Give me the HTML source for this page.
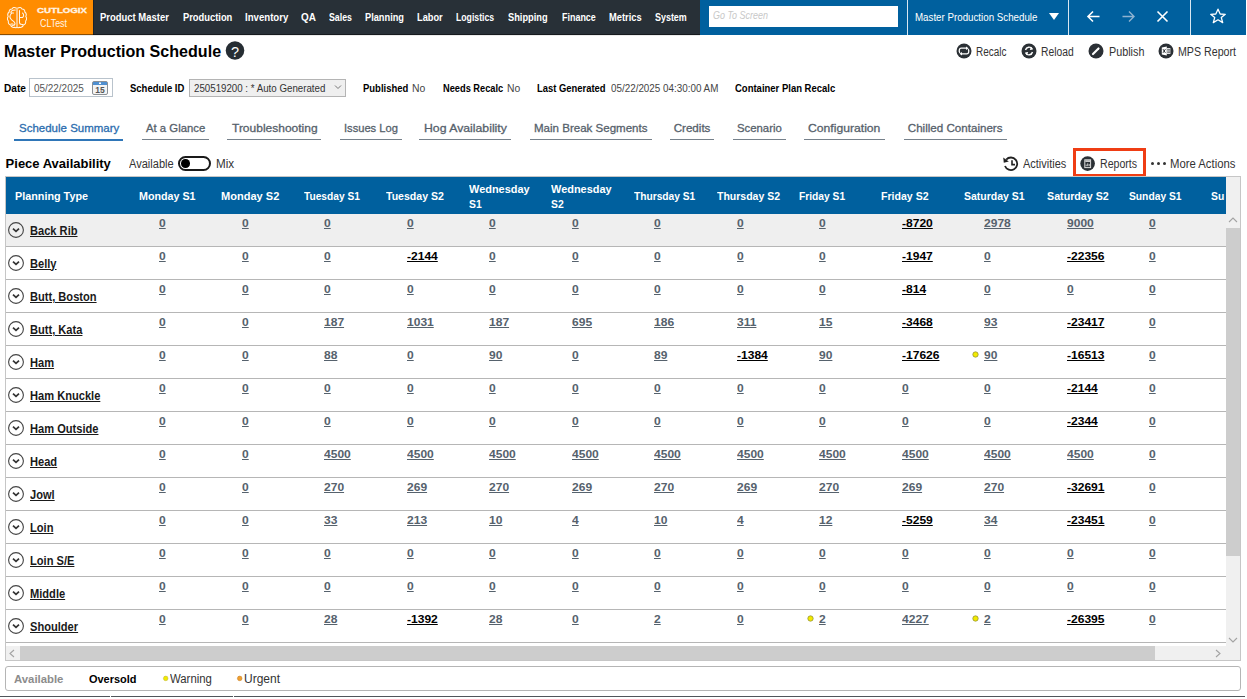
<!DOCTYPE html>
<html><head><meta charset="utf-8"><title>Master Production Schedule</title>
<style>
html,body{margin:0;padding:0;background:#fff;width:1247px;height:699px;overflow:hidden;}
body{position:relative;font-family:"Liberation Sans",sans-serif;}
.t{position:absolute;white-space:nowrap;transform-origin:0 0;}
.r{position:absolute;}
</style></head><body>
<div class="r" style="left:0px;top:0px;width:93px;height:35px;background:#ff8c00;"></div>
<div class="r" style="left:93px;top:0px;width:607px;height:35px;background:#283037;"></div>
<div class="r" style="left:700px;top:0px;width:545.5px;height:35px;background:#00609e;"></div>
<div class="r" style="left:0px;top:34px;width:700px;height:1px;background:rgba(0,0,0,0.45);"></div>
<div class="r" style="left:92.5px;top:0px;width:1px;height:35px;background:rgba(0,0,0,0.25);"></div>
<div class="r" style="left:0px;top:35px;width:700px;height:1px;background:rgba(0,0,0,0.08);"></div>
<svg class="r" style="left:5px;top:6px;" width="23" height="23" viewBox="0 0 23 23"><g fill="none" stroke="#fff" stroke-width="1.05" opacity="0.92" stroke-linejoin="round" stroke-linecap="round">
<path d="M13 2 C14.5 1 16.5 1.5 17 3 C19 3 20 4.5 19.8 6 C21.3 7 21.5 9 20.8 10.5 C21.8 12 21.6 14 20.6 15 C21 17 20 18.8 18.3 19 C17.8 21 16 21.8 14.5 21.2 C13.8 22 12.5 22 12 21.5"/>
<path d="M11 2 C9.5 1 7.5 1.5 7 3 C5 3 4 4.5 4.2 6 C2.7 7 2.5 9 3.2 10.5 C2.2 12 2.4 14 3.4 15 C3 17 4 18.8 5.7 19 C6.2 21 8 21.8 9.5 21.2 C10.2 22 11.5 22 12 21.5"/>
<path d="M12 2 V21.5"/>
<path d="M10.3 4 C7 4 5.5 5.5 6 7 L8.5 7 M6.5 7.5 C4.5 9.5 4.8 12 6.3 13.5 C7.5 15 10 15.5 10 17.5 C10 19 9 19.5 7.5 19.5 M6 18 L8 18"/>
<path d="M14.5 4.5 V16.5 C14.5 18 15.5 18.5 17 18.5 L18 18.5 M17.5 7 C19 8 19 10.5 17.5 11.5 L15 11.5"/>
</g></svg>
<span class="t" style="left:37.00px;top:6.20px;font-size:7.5px;line-height:9px;color:#fff4e6;font-weight:bold;transform:scaleX(1.2903);-webkit-text-stroke:0.3px #fff4e6;">CUTLOGIX</span>
<span class="t" style="left:40.00px;top:18.00px;font-size:10px;line-height:11px;color:#fff4e6;transform:scaleX(0.8882);">CLTest</span>
<span class="t" style="left:100.10px;top:10.60px;font-size:11px;line-height:12px;color:#ffffff;font-weight:bold;transform:scaleX(0.8595);">Product Master</span>
<span class="t" style="left:182.60px;top:10.60px;font-size:11px;line-height:12px;color:#ffffff;font-weight:bold;transform:scaleX(0.8493);">Production</span>
<span class="t" style="left:245.20px;top:10.60px;font-size:11px;line-height:12px;color:#ffffff;font-weight:bold;transform:scaleX(0.8747);">Inventory</span>
<span class="t" style="left:301.20px;top:10.60px;font-size:11px;line-height:12px;color:#ffffff;font-weight:bold;transform:scaleX(0.9030);">QA</span>
<span class="t" style="left:328.60px;top:10.60px;font-size:11px;line-height:12px;color:#ffffff;font-weight:bold;transform:scaleX(0.7965);">Sales</span>
<span class="t" style="left:365.00px;top:10.60px;font-size:11px;line-height:12px;color:#ffffff;font-weight:bold;transform:scaleX(0.8396);">Planning</span>
<span class="t" style="left:417.30px;top:10.60px;font-size:11px;line-height:12px;color:#ffffff;font-weight:bold;transform:scaleX(0.8412);">Labor</span>
<span class="t" style="left:456.20px;top:10.60px;font-size:11px;line-height:12px;color:#ffffff;font-weight:bold;transform:scaleX(0.7888);">Logistics</span>
<span class="t" style="left:508.20px;top:10.60px;font-size:11px;line-height:12px;color:#ffffff;font-weight:bold;transform:scaleX(0.8417);">Shipping</span>
<span class="t" style="left:561.60px;top:10.60px;font-size:11px;line-height:12px;color:#ffffff;font-weight:bold;transform:scaleX(0.8135);">Finance</span>
<span class="t" style="left:609.00px;top:10.60px;font-size:11px;line-height:12px;color:#ffffff;font-weight:bold;transform:scaleX(0.8468);">Metrics</span>
<span class="t" style="left:655.10px;top:10.60px;font-size:11px;line-height:12px;color:#ffffff;font-weight:bold;transform:scaleX(0.8123);">System</span>
<div class="r" style="left:709px;top:6px;width:189px;height:21px;background:#ffffff;"></div>
<span class="t" style="left:713.00px;top:9.20px;font-size:11.2px;line-height:12px;color:#c8c8c8;font-style:italic;transform:scaleX(0.8006);">Go To Screen</span>
<div class="r" style="left:907px;top:0px;width:1px;height:35px;background:rgba(255,255,255,0.85);"></div>
<div class="r" style="left:1068px;top:0px;width:1px;height:35px;background:rgba(255,255,255,0.85);"></div>
<div class="r" style="left:1190px;top:0px;width:1px;height:35px;background:rgba(255,255,255,0.85);"></div>
<span class="t" style="left:915.30px;top:10.50px;font-size:11px;line-height:12px;color:#ffffff;transform:scaleX(0.8857);">Master Production Schedule</span>
<svg class="r" style="left:1048px;top:12px;" width="12" height="9" viewBox="0 0 12 9"><path d="M1 1 L11 1 L6 8 Z" fill="#fff"/></svg>
<svg class="r" style="left:1086px;top:10px;" width="15" height="13" viewBox="0 0 15 13"><path d="M13.5 6.5 H2 M7 1.5 L2 6.5 L7 11.5" fill="none" stroke="#fff" stroke-width="1.6"/></svg>
<svg class="r" style="left:1121px;top:10px;" width="15" height="13" viewBox="0 0 15 13"><path d="M1.5 6.5 H13 M8 1.5 L13 6.5 L8 11.5" fill="none" stroke="#8fb3d1" stroke-width="1.4"/></svg>
<svg class="r" style="left:1156px;top:10px;" width="13" height="13" viewBox="0 0 13 13"><path d="M1.5 1.5 L11.5 11.5 M11.5 1.5 L1.5 11.5" fill="none" stroke="#fff" stroke-width="1.6"/></svg>
<svg class="r" style="left:1209px;top:8px;" width="18" height="16" viewBox="0 0 18 16"><path d="M9 1.2 L11.2 6 L16.3 6.3 L12.3 9.6 L13.7 14.6 L9 11.8 L4.3 14.6 L5.7 9.6 L1.7 6.3 L6.8 6 Z" fill="none" stroke="#fff" stroke-width="1.3" stroke-linejoin="round"/></svg>
<span class="t" style="left:4.40px;top:41.60px;font-size:17px;line-height:19px;color:#000;font-weight:bold;transform:scaleX(0.9458);">Master Production Schedule</span>
<svg class="r" style="left:225px;top:41px;" width="20" height="20" viewBox="0 0 20 20"><circle cx="10" cy="9.5" r="9.3" fill="#262d33"/></svg>
<span class="t" style="left:230.80px;top:43.00px;font-size:15.5px;line-height:17px;color:#fff;transform:scaleX(0.9302);">?</span>
<svg class="r" style="left:955.6px;top:42.8px;" width="16" height="16" viewBox="0 0 16 16"><circle cx="8" cy="8" r="7.5" fill="#2b3035"/><path d="M11 5.2 H5.2 C3 5.2 2.8 8.4 3.8 9.8 M5 10.8 H10.8 C13 10.8 13.2 7.6 12.2 6.2" fill="none" stroke="#fff" stroke-width="1.3"/><path d="M10 3.4 L12.6 5.2 L10 7 Z M6 9 L3.4 10.8 L6 12.6 Z" fill="#fff"/></svg>
<span class="t" style="left:976.30px;top:44.80px;font-size:12px;line-height:14px;color:#333;transform:scaleX(0.8283);">Recalc</span>
<svg class="r" style="left:1020.5999999999999px;top:42.8px;" width="16" height="16" viewBox="0 0 16 16"><circle cx="8" cy="8" r="7.5" fill="#2b3035"/><path d="M4.5 7 A3.7 3.7 0 0 1 11.3 6 M11.5 9 A3.7 3.7 0 0 1 4.7 10" fill="none" stroke="#fff" stroke-width="1.4"/><path d="M10 3.8 L12 6.6 L8.8 6.9 Z M6 12.2 L4 9.4 L7.2 9.1 Z" fill="#fff"/></svg>
<span class="t" style="left:1041.30px;top:44.80px;font-size:12px;line-height:14px;color:#333;transform:scaleX(0.8594);">Reload</span>
<svg class="r" style="left:1088.4px;top:42.8px;" width="16" height="16" viewBox="0 0 16 16"><circle cx="8" cy="8" r="7.5" fill="#2b3035"/><path d="M5 11 L10.5 5.5" stroke="#fff" stroke-width="2.2" stroke-linecap="round"/></svg>
<span class="t" style="left:1108.90px;top:44.80px;font-size:12px;line-height:14px;color:#333;transform:scaleX(0.8996);">Publish</span>
<svg class="r" style="left:1158.2px;top:42.8px;" width="16" height="16" viewBox="0 0 16 16"><circle cx="8" cy="8" r="7.5" fill="#2b3035"/><path d="M3.8 4.6 L8.8 3.6 V12.4 L3.8 11.4 Z" fill="#fff"/><path d="M5 6.2 L7.4 9.8 M7.4 6.2 L5 9.8" stroke="#2b3035" stroke-width="1"/><rect x="8.8" y="5" width="3.6" height="6" fill="#fff" opacity="0.85"/><path d="M9.2 6.6 H12 M9.2 8 H12 M9.2 9.4 H12" stroke="#2b3035" stroke-width="0.6"/></svg>
<span class="t" style="left:1178.40px;top:44.80px;font-size:12px;line-height:14px;color:#333;transform:scaleX(0.8875);">MPS Report</span>
<span class="t" style="left:3.50px;top:82.20px;font-size:11px;line-height:12px;color:#000;font-weight:bold;transform:scaleX(0.9182);">Date</span>
<div class="r" style="left:29px;top:78px;width:84px;height:19px;background:#fff;box-sizing:border-box;border:1px solid #b9c3cc;"></div>
<span class="t" style="left:34.00px;top:82.20px;font-size:11px;line-height:12px;color:#555;transform:scaleX(0.9028);">05/22/2025</span>
<svg class="r" style="left:92px;top:81px;" width="16" height="14" viewBox="0 0 16 14"><rect x="0.5" y="0.5" width="15" height="13" rx="1.5" fill="#f4f4f4" stroke="#8a8f94"/><rect x="1" y="1" width="14" height="3" fill="#4f8fd0"/><rect x="7" y="1.5" width="2" height="1.5" fill="#fff"/><text x="8" y="12.3" font-family="Liberation Sans" font-size="8.5" font-weight="bold" text-anchor="middle" fill="#555">15</text></svg>
<span class="t" style="left:129.90px;top:82.20px;font-size:11px;line-height:12px;color:#000;font-weight:bold;transform:scaleX(0.8626);">Schedule ID</span>
<div class="r" style="left:189px;top:79px;width:157px;height:18px;background:#efefef;box-sizing:border-box;border:1px solid #b4b4b4;"></div>
<span class="t" style="left:194.00px;top:82.20px;font-size:11px;line-height:12px;color:#333;transform:scaleX(0.8840);">250519200 : * Auto Generated</span>
<svg class="r" style="left:334px;top:84px;" width="8" height="6" viewBox="0 0 8 6"><path d="M1 1.5 L4 4.5 L7 1.5" fill="none" stroke="#777" stroke-width="1"/></svg>
<span class="t" style="left:362.80px;top:82.20px;font-size:11px;line-height:12px;color:#000;font-weight:bold;transform:scaleX(0.8620);">Published</span>
<span class="t" style="left:412.10px;top:82.20px;font-size:11px;line-height:12px;color:#444;transform:scaleX(0.9466);">No</span>
<span class="t" style="left:443.00px;top:82.20px;font-size:11px;line-height:12px;color:#000;font-weight:bold;transform:scaleX(0.8414);">Needs Recalc</span>
<span class="t" style="left:507.20px;top:82.20px;font-size:11px;line-height:12px;color:#444;transform:scaleX(0.9395);">No</span>
<span class="t" style="left:537.20px;top:82.20px;font-size:11px;line-height:12px;color:#000;font-weight:bold;transform:scaleX(0.8564);">Last Generated</span>
<span class="t" style="left:610.60px;top:82.20px;font-size:11px;line-height:12px;color:#444;transform:scaleX(0.8957);">05/22/2025 04:30:00 AM</span>
<span class="t" style="left:735.00px;top:82.20px;font-size:11px;line-height:12px;color:#000;font-weight:bold;transform:scaleX(0.8627);">Container Plan Recalc</span>
<span class="t" style="left:18.50px;top:122.10px;font-size:11.6px;line-height:12px;color:#2a6cae;transform:scaleX(0.9916);-webkit-text-stroke:0.3px #2a6cae;">Schedule Summary</span>
<div class="r" style="left:14px;top:139px;width:109px;height:2px;background:#2f76b8;"></div>
<span class="t" style="left:145.50px;top:122.30px;font-size:11.6px;line-height:12px;color:#56616b;transform:scaleX(0.9785);-webkit-text-stroke:0.3px #56616b;">At a Glance</span>
<div class="r" style="left:142px;top:139px;width:67px;height:1px;background:#76818b;"></div>
<span class="t" style="left:231.70px;top:122.30px;font-size:11.6px;line-height:12px;color:#56616b;transform:scaleX(1.0344);-webkit-text-stroke:0.3px #56616b;">Troubleshooting</span>
<div class="r" style="left:227px;top:139px;width:94px;height:1px;background:#76818b;"></div>
<span class="t" style="left:343.50px;top:122.30px;font-size:11.6px;line-height:12px;color:#56616b;transform:scaleX(0.9608);-webkit-text-stroke:0.3px #56616b;">Issues Log</span>
<div class="r" style="left:340px;top:139px;width:62px;height:1px;background:#76818b;"></div>
<span class="t" style="left:424.10px;top:122.30px;font-size:11.6px;line-height:12px;color:#56616b;transform:scaleX(1.0567);-webkit-text-stroke:0.3px #56616b;">Hog Availability</span>
<div class="r" style="left:419px;top:139px;width:92px;height:1px;background:#76818b;"></div>
<span class="t" style="left:534.00px;top:122.30px;font-size:11.6px;line-height:12px;color:#56616b;transform:scaleX(0.9947);-webkit-text-stroke:0.3px #56616b;">Main Break Segments</span>
<div class="r" style="left:530px;top:139px;width:122px;height:1px;background:#76818b;"></div>
<span class="t" style="left:673.70px;top:122.30px;font-size:11.6px;line-height:12px;color:#56616b;-webkit-text-stroke:0.3px #56616b;">Credits</span>
<div class="r" style="left:670px;top:139px;width:44px;height:1px;background:#76818b;"></div>
<span class="t" style="left:736.70px;top:122.30px;font-size:11.6px;line-height:12px;color:#56616b;transform:scaleX(0.9782);-webkit-text-stroke:0.3px #56616b;">Scenario</span>
<div class="r" style="left:733px;top:139px;width:53px;height:1px;background:#76818b;"></div>
<span class="t" style="left:808.30px;top:122.30px;font-size:11.6px;line-height:12px;color:#56616b;transform:scaleX(1.0493);-webkit-text-stroke:0.3px #56616b;">Configuration</span>
<div class="r" style="left:804px;top:139px;width:81px;height:1px;background:#76818b;"></div>
<span class="t" style="left:907.80px;top:122.30px;font-size:11.6px;line-height:12px;color:#56616b;-webkit-text-stroke:0.3px #56616b;">Chilled Containers</span>
<div class="r" style="left:904px;top:139px;width:103px;height:1px;background:#76818b;"></div>
<span class="t" style="left:5.60px;top:156.40px;font-size:13px;line-height:15px;color:#000;font-weight:bold;">Piece Availability</span>
<span class="t" style="left:129.30px;top:157.00px;font-size:12px;line-height:14px;color:#333;transform:scaleX(0.9216);">Available</span>
<div class="r" style="left:178px;top:156px;width:33px;height:15px;background:#fff;box-sizing:border-box;border:2px solid #1a1a1a;border-radius:8px;"></div>
<div class="r" style="left:181px;top:159px;width:8.6px;height:8.6px;background:#000;border-radius:50%;"></div>
<span class="t" style="left:215.50px;top:157.00px;font-size:12px;line-height:14px;color:#333;transform:scaleX(0.9705);">Mix</span>
<svg class="r" style="left:1002px;top:155px;" width="18" height="17" viewBox="0 0 18 17"><path d="M4.2 4.6 A6.3 6.3 0 1 1 3 11" fill="none" stroke="#222" stroke-width="1.8"/><path d="M1.2 2.5 L1.8 7.8 L6.8 6.6 Z" fill="#222"/><path d="M10 5.3 V9.6 H13" fill="none" stroke="#222" stroke-width="1.6"/></svg>
<span class="t" style="left:1023.00px;top:157.00px;font-size:12px;line-height:14px;color:#333;transform:scaleX(0.9145);">Activities</span>
<div class="r" style="left:1073px;top:148px;width:73px;height:28.5px;background:transparent;box-sizing:border-box;border:3px solid #ef3d14;"></div>
<svg class="r" style="left:1080px;top:155.5px;" width="16" height="16" viewBox="0 0 16 16"><circle cx="7.6" cy="7.6" r="7.3" fill="#2b3035"/><rect x="4.8" y="3.8" width="5.8" height="7.8" fill="none" stroke="#ddd" stroke-width="1"/><rect x="5.3" y="4.3" width="4.8" height="1.6" fill="#ddd"/><path d="M6.2 10.2 V8.6 M7.7 10.2 V7.4 M9.2 10.2 V8" stroke="#ddd" stroke-width="0.9"/></svg>
<span class="t" style="left:1099.60px;top:157.00px;font-size:12px;line-height:14px;color:#333;transform:scaleX(0.8833);">Reports</span>
<div class="r" style="left:1150.9px;top:161.6px;width:3.2px;height:3.2px;background:#333;border-radius:50%;"></div>
<div class="r" style="left:1156.7px;top:161.6px;width:3.2px;height:3.2px;background:#333;border-radius:50%;"></div>
<div class="r" style="left:1162.5px;top:161.6px;width:3.2px;height:3.2px;background:#333;border-radius:50%;"></div>
<span class="t" style="left:1170.30px;top:157.00px;font-size:12px;line-height:14px;color:#333;transform:scaleX(0.9430);">More Actions</span>
<div class="r" style="left:5px;top:176px;width:1236px;height:485px;background:transparent;box-sizing:border-box;border:1px solid #c6c6c6;"></div>
<div class="r" style="left:6px;top:177px;width:1220px;height:37px;background:#00609e;"></div>
<div class="r" style="left:1226px;top:177px;width:14px;height:483px;background:#f0f0f0;"></div>
<div class="r" style="left:1226px;top:228px;width:13.5px;height:328px;background:#cdcdcd;"></div>
<svg class="r" style="left:1227px;top:216px;" width="12" height="8" viewBox="0 0 12 8"><path d="M2 6 L6 2 L10 6" fill="none" stroke="#a3a3a3" stroke-width="1.1"/></svg>
<svg class="r" style="left:1227px;top:636px;" width="12" height="8" viewBox="0 0 12 8"><path d="M2 2 L6 6 L10 2" fill="none" stroke="#a3a3a3" stroke-width="1.1"/></svg>
<div class="r" style="left:6px;top:646px;width:1220px;height:14px;background:#f0f0f0;"></div>
<div class="r" style="left:20px;top:646px;width:1135px;height:14px;background:#cdcdcd;"></div>
<svg class="r" style="left:8px;top:648px;" width="8" height="11" viewBox="0 0 8 11"><path d="M6 2 L2 5.5 L6 9" fill="none" stroke="#a3a3a3" stroke-width="1.1"/></svg>
<svg class="r" style="left:1214px;top:648px;" width="8" height="11" viewBox="0 0 8 11"><path d="M2 2 L6 5.5 L2 9" fill="none" stroke="#a3a3a3" stroke-width="1.1"/></svg>
<span class="t" style="left:15.20px;top:190.00px;font-size:11.5px;line-height:12px;color:#fff;font-weight:bold;transform:scaleX(0.9389);">Planning Type</span>
<span class="t" style="left:138.80px;top:190.00px;font-size:11.5px;line-height:12px;color:#fff;font-weight:bold;transform:scaleX(0.9308);">Monday S1</span>
<span class="t" style="left:221.30px;top:190.00px;font-size:11.5px;line-height:12px;color:#fff;font-weight:bold;transform:scaleX(0.9605);">Monday S2</span>
<span class="t" style="left:303.80px;top:190.00px;font-size:11.5px;line-height:12px;color:#fff;font-weight:bold;transform:scaleX(0.8866);">Tuesday S1</span>
<span class="t" style="left:386.10px;top:190.00px;font-size:11.5px;line-height:12px;color:#fff;font-weight:bold;transform:scaleX(0.9183);">Tuesday S2</span>
<span class="t" style="left:468.80px;top:183.20px;font-size:11.5px;line-height:12px;color:#fff;font-weight:bold;transform:scaleX(0.9513);">Wednesday</span>
<span class="t" style="left:468.80px;top:197.50px;font-size:11.5px;line-height:12px;color:#fff;font-weight:bold;transform:scaleX(0.9000);">S1</span>
<span class="t" style="left:551.30px;top:183.20px;font-size:11.5px;line-height:12px;color:#fff;font-weight:bold;transform:scaleX(0.9513);">Wednesday</span>
<span class="t" style="left:551.30px;top:197.50px;font-size:11.5px;line-height:12px;color:#fff;font-weight:bold;transform:scaleX(0.9000);">S2</span>
<span class="t" style="left:634.30px;top:190.00px;font-size:11.5px;line-height:12px;color:#fff;font-weight:bold;transform:scaleX(0.8878);">Thursday S1</span>
<span class="t" style="left:716.80px;top:190.00px;font-size:11.5px;line-height:12px;color:#fff;font-weight:bold;transform:scaleX(0.9124);">Thursday S2</span>
<span class="t" style="left:798.70px;top:190.00px;font-size:11.5px;line-height:12px;color:#fff;font-weight:bold;transform:scaleX(0.8908);">Friday S1</span>
<span class="t" style="left:881.10px;top:190.00px;font-size:11.5px;line-height:12px;color:#fff;font-weight:bold;transform:scaleX(0.9198);">Friday S2</span>
<span class="t" style="left:963.50px;top:190.00px;font-size:11.5px;line-height:12px;color:#fff;font-weight:bold;transform:scaleX(0.9128);">Saturday S1</span>
<span class="t" style="left:1046.70px;top:190.00px;font-size:11.5px;line-height:12px;color:#fff;font-weight:bold;transform:scaleX(0.9293);">Saturday S2</span>
<span class="t" style="left:1129.00px;top:190.00px;font-size:11.5px;line-height:12px;color:#fff;font-weight:bold;transform:scaleX(0.8929);">Sunday S1</span>
<span class="t" style="left:1211.30px;top:190.00px;font-size:11.5px;line-height:12px;color:#fff;font-weight:bold;transform:scaleX(0.9000);">Su</span>
<div class="r" style="left:1226px;top:177px;width:14px;height:37px;background:#f0f0f0;"></div>
<div class="r" style="left:6px;top:214px;width:1220px;height:32px;background:#efefef;"></div>
<div class="r" style="left:6px;top:246px;width:1220px;height:1px;background:#b6b6b6;"></div>
<svg class="r" style="left:8px;top:222px;" width="17" height="17" viewBox="0 0 17 17"><circle cx="8" cy="8" r="7.4" fill="none" stroke="#444" stroke-width="1.1"/><path d="M5 6.6 L8 9.4 L11 6.6" fill="none" stroke="#333" stroke-width="1.7"/></svg>
<span class="t" style="left:29.60px;top:223.50px;font-size:12px;line-height:14px;color:#1a1a1a;font-weight:bold;transform:scaleX(0.9250);text-decoration:underline;">Back Rib</span>
<span class="t" style="left:159.30px;top:216.80px;font-size:11.2px;line-height:12px;color:#56626d;font-weight:bold;transform:scaleX(1.0750);text-decoration:underline;">0</span>
<span class="t" style="left:241.80px;top:216.80px;font-size:11.2px;line-height:12px;color:#56626d;font-weight:bold;transform:scaleX(1.0750);text-decoration:underline;">0</span>
<span class="t" style="left:324.30px;top:216.80px;font-size:11.2px;line-height:12px;color:#56626d;font-weight:bold;transform:scaleX(1.0750);text-decoration:underline;">0</span>
<span class="t" style="left:406.80px;top:216.80px;font-size:11.2px;line-height:12px;color:#56626d;font-weight:bold;transform:scaleX(1.0750);text-decoration:underline;">0</span>
<span class="t" style="left:489.30px;top:216.80px;font-size:11.2px;line-height:12px;color:#56626d;font-weight:bold;transform:scaleX(1.0750);text-decoration:underline;">0</span>
<span class="t" style="left:571.80px;top:216.80px;font-size:11.2px;line-height:12px;color:#56626d;font-weight:bold;transform:scaleX(1.0750);text-decoration:underline;">0</span>
<span class="t" style="left:654.30px;top:216.80px;font-size:11.2px;line-height:12px;color:#56626d;font-weight:bold;transform:scaleX(1.0750);text-decoration:underline;">0</span>
<span class="t" style="left:736.80px;top:216.80px;font-size:11.2px;line-height:12px;color:#56626d;font-weight:bold;transform:scaleX(1.0750);text-decoration:underline;">0</span>
<span class="t" style="left:819.30px;top:216.80px;font-size:11.2px;line-height:12px;color:#56626d;font-weight:bold;transform:scaleX(1.0750);text-decoration:underline;">0</span>
<span class="t" style="left:901.80px;top:216.80px;font-size:11.2px;line-height:12px;color:#000;font-weight:bold;transform:scaleX(1.0750);text-decoration:underline;">-8720</span>
<span class="t" style="left:984.30px;top:216.80px;font-size:11.2px;line-height:12px;color:#56626d;font-weight:bold;transform:scaleX(1.0750);text-decoration:underline;">2978</span>
<span class="t" style="left:1066.80px;top:216.80px;font-size:11.2px;line-height:12px;color:#56626d;font-weight:bold;transform:scaleX(1.0750);text-decoration:underline;">9000</span>
<span class="t" style="left:1149.30px;top:216.80px;font-size:11.2px;line-height:12px;color:#56626d;font-weight:bold;transform:scaleX(1.0750);text-decoration:underline;">0</span>
<div class="r" style="left:6px;top:279px;width:1220px;height:1px;background:#b6b6b6;"></div>
<svg class="r" style="left:8px;top:255px;" width="17" height="17" viewBox="0 0 17 17"><circle cx="8" cy="8" r="7.4" fill="none" stroke="#444" stroke-width="1.1"/><path d="M5 6.6 L8 9.4 L11 6.6" fill="none" stroke="#333" stroke-width="1.7"/></svg>
<span class="t" style="left:29.60px;top:256.50px;font-size:12px;line-height:14px;color:#1a1a1a;font-weight:bold;transform:scaleX(0.9250);text-decoration:underline;">Belly</span>
<span class="t" style="left:159.30px;top:249.80px;font-size:11.2px;line-height:12px;color:#56626d;font-weight:bold;transform:scaleX(1.0750);text-decoration:underline;">0</span>
<span class="t" style="left:241.80px;top:249.80px;font-size:11.2px;line-height:12px;color:#56626d;font-weight:bold;transform:scaleX(1.0750);text-decoration:underline;">0</span>
<span class="t" style="left:324.30px;top:249.80px;font-size:11.2px;line-height:12px;color:#56626d;font-weight:bold;transform:scaleX(1.0750);text-decoration:underline;">0</span>
<span class="t" style="left:406.80px;top:249.80px;font-size:11.2px;line-height:12px;color:#000;font-weight:bold;transform:scaleX(1.0750);text-decoration:underline;">-2144</span>
<span class="t" style="left:489.30px;top:249.80px;font-size:11.2px;line-height:12px;color:#56626d;font-weight:bold;transform:scaleX(1.0750);text-decoration:underline;">0</span>
<span class="t" style="left:571.80px;top:249.80px;font-size:11.2px;line-height:12px;color:#56626d;font-weight:bold;transform:scaleX(1.0750);text-decoration:underline;">0</span>
<span class="t" style="left:654.30px;top:249.80px;font-size:11.2px;line-height:12px;color:#56626d;font-weight:bold;transform:scaleX(1.0750);text-decoration:underline;">0</span>
<span class="t" style="left:736.80px;top:249.80px;font-size:11.2px;line-height:12px;color:#56626d;font-weight:bold;transform:scaleX(1.0750);text-decoration:underline;">0</span>
<span class="t" style="left:819.30px;top:249.80px;font-size:11.2px;line-height:12px;color:#56626d;font-weight:bold;transform:scaleX(1.0750);text-decoration:underline;">0</span>
<span class="t" style="left:901.80px;top:249.80px;font-size:11.2px;line-height:12px;color:#000;font-weight:bold;transform:scaleX(1.0750);text-decoration:underline;">-1947</span>
<span class="t" style="left:984.30px;top:249.80px;font-size:11.2px;line-height:12px;color:#56626d;font-weight:bold;transform:scaleX(1.0750);text-decoration:underline;">0</span>
<span class="t" style="left:1066.80px;top:249.80px;font-size:11.2px;line-height:12px;color:#000;font-weight:bold;transform:scaleX(1.0750);text-decoration:underline;">-22356</span>
<span class="t" style="left:1149.30px;top:249.80px;font-size:11.2px;line-height:12px;color:#56626d;font-weight:bold;transform:scaleX(1.0750);text-decoration:underline;">0</span>
<div class="r" style="left:6px;top:312px;width:1220px;height:1px;background:#b6b6b6;"></div>
<svg class="r" style="left:8px;top:288px;" width="17" height="17" viewBox="0 0 17 17"><circle cx="8" cy="8" r="7.4" fill="none" stroke="#444" stroke-width="1.1"/><path d="M5 6.6 L8 9.4 L11 6.6" fill="none" stroke="#333" stroke-width="1.7"/></svg>
<span class="t" style="left:29.60px;top:289.50px;font-size:12px;line-height:14px;color:#1a1a1a;font-weight:bold;transform:scaleX(0.9250);text-decoration:underline;">Butt, Boston</span>
<span class="t" style="left:159.30px;top:282.80px;font-size:11.2px;line-height:12px;color:#56626d;font-weight:bold;transform:scaleX(1.0750);text-decoration:underline;">0</span>
<span class="t" style="left:241.80px;top:282.80px;font-size:11.2px;line-height:12px;color:#56626d;font-weight:bold;transform:scaleX(1.0750);text-decoration:underline;">0</span>
<span class="t" style="left:324.30px;top:282.80px;font-size:11.2px;line-height:12px;color:#56626d;font-weight:bold;transform:scaleX(1.0750);text-decoration:underline;">0</span>
<span class="t" style="left:406.80px;top:282.80px;font-size:11.2px;line-height:12px;color:#56626d;font-weight:bold;transform:scaleX(1.0750);text-decoration:underline;">0</span>
<span class="t" style="left:489.30px;top:282.80px;font-size:11.2px;line-height:12px;color:#56626d;font-weight:bold;transform:scaleX(1.0750);text-decoration:underline;">0</span>
<span class="t" style="left:571.80px;top:282.80px;font-size:11.2px;line-height:12px;color:#56626d;font-weight:bold;transform:scaleX(1.0750);text-decoration:underline;">0</span>
<span class="t" style="left:654.30px;top:282.80px;font-size:11.2px;line-height:12px;color:#56626d;font-weight:bold;transform:scaleX(1.0750);text-decoration:underline;">0</span>
<span class="t" style="left:736.80px;top:282.80px;font-size:11.2px;line-height:12px;color:#56626d;font-weight:bold;transform:scaleX(1.0750);text-decoration:underline;">0</span>
<span class="t" style="left:819.30px;top:282.80px;font-size:11.2px;line-height:12px;color:#56626d;font-weight:bold;transform:scaleX(1.0750);text-decoration:underline;">0</span>
<span class="t" style="left:901.80px;top:282.80px;font-size:11.2px;line-height:12px;color:#000;font-weight:bold;transform:scaleX(1.0750);text-decoration:underline;">-814</span>
<span class="t" style="left:984.30px;top:282.80px;font-size:11.2px;line-height:12px;color:#56626d;font-weight:bold;transform:scaleX(1.0750);text-decoration:underline;">0</span>
<span class="t" style="left:1066.80px;top:282.80px;font-size:11.2px;line-height:12px;color:#56626d;font-weight:bold;transform:scaleX(1.0750);text-decoration:underline;">0</span>
<span class="t" style="left:1149.30px;top:282.80px;font-size:11.2px;line-height:12px;color:#56626d;font-weight:bold;transform:scaleX(1.0750);text-decoration:underline;">0</span>
<div class="r" style="left:6px;top:345px;width:1220px;height:1px;background:#b6b6b6;"></div>
<svg class="r" style="left:8px;top:321px;" width="17" height="17" viewBox="0 0 17 17"><circle cx="8" cy="8" r="7.4" fill="none" stroke="#444" stroke-width="1.1"/><path d="M5 6.6 L8 9.4 L11 6.6" fill="none" stroke="#333" stroke-width="1.7"/></svg>
<span class="t" style="left:29.60px;top:322.50px;font-size:12px;line-height:14px;color:#1a1a1a;font-weight:bold;transform:scaleX(0.9250);text-decoration:underline;">Butt, Kata</span>
<span class="t" style="left:159.30px;top:315.80px;font-size:11.2px;line-height:12px;color:#56626d;font-weight:bold;transform:scaleX(1.0750);text-decoration:underline;">0</span>
<span class="t" style="left:241.80px;top:315.80px;font-size:11.2px;line-height:12px;color:#56626d;font-weight:bold;transform:scaleX(1.0750);text-decoration:underline;">0</span>
<span class="t" style="left:324.30px;top:315.80px;font-size:11.2px;line-height:12px;color:#56626d;font-weight:bold;transform:scaleX(1.0750);text-decoration:underline;">187</span>
<span class="t" style="left:406.80px;top:315.80px;font-size:11.2px;line-height:12px;color:#56626d;font-weight:bold;transform:scaleX(1.0750);text-decoration:underline;">1031</span>
<span class="t" style="left:489.30px;top:315.80px;font-size:11.2px;line-height:12px;color:#56626d;font-weight:bold;transform:scaleX(1.0750);text-decoration:underline;">187</span>
<span class="t" style="left:571.80px;top:315.80px;font-size:11.2px;line-height:12px;color:#56626d;font-weight:bold;transform:scaleX(1.0750);text-decoration:underline;">695</span>
<span class="t" style="left:654.30px;top:315.80px;font-size:11.2px;line-height:12px;color:#56626d;font-weight:bold;transform:scaleX(1.0750);text-decoration:underline;">186</span>
<span class="t" style="left:736.80px;top:315.80px;font-size:11.2px;line-height:12px;color:#56626d;font-weight:bold;transform:scaleX(1.0750);text-decoration:underline;">311</span>
<span class="t" style="left:819.30px;top:315.80px;font-size:11.2px;line-height:12px;color:#56626d;font-weight:bold;transform:scaleX(1.0750);text-decoration:underline;">15</span>
<span class="t" style="left:901.80px;top:315.80px;font-size:11.2px;line-height:12px;color:#000;font-weight:bold;transform:scaleX(1.0750);text-decoration:underline;">-3468</span>
<span class="t" style="left:984.30px;top:315.80px;font-size:11.2px;line-height:12px;color:#56626d;font-weight:bold;transform:scaleX(1.0750);text-decoration:underline;">93</span>
<span class="t" style="left:1066.80px;top:315.80px;font-size:11.2px;line-height:12px;color:#000;font-weight:bold;transform:scaleX(1.0750);text-decoration:underline;">-23417</span>
<span class="t" style="left:1149.30px;top:315.80px;font-size:11.2px;line-height:12px;color:#56626d;font-weight:bold;transform:scaleX(1.0750);text-decoration:underline;">0</span>
<div class="r" style="left:6px;top:378px;width:1220px;height:1px;background:#b6b6b6;"></div>
<svg class="r" style="left:8px;top:354px;" width="17" height="17" viewBox="0 0 17 17"><circle cx="8" cy="8" r="7.4" fill="none" stroke="#444" stroke-width="1.1"/><path d="M5 6.6 L8 9.4 L11 6.6" fill="none" stroke="#333" stroke-width="1.7"/></svg>
<span class="t" style="left:29.60px;top:355.50px;font-size:12px;line-height:14px;color:#1a1a1a;font-weight:bold;transform:scaleX(0.9250);text-decoration:underline;">Ham</span>
<span class="t" style="left:159.30px;top:348.80px;font-size:11.2px;line-height:12px;color:#56626d;font-weight:bold;transform:scaleX(1.0750);text-decoration:underline;">0</span>
<span class="t" style="left:241.80px;top:348.80px;font-size:11.2px;line-height:12px;color:#56626d;font-weight:bold;transform:scaleX(1.0750);text-decoration:underline;">0</span>
<span class="t" style="left:324.30px;top:348.80px;font-size:11.2px;line-height:12px;color:#56626d;font-weight:bold;transform:scaleX(1.0750);text-decoration:underline;">88</span>
<span class="t" style="left:406.80px;top:348.80px;font-size:11.2px;line-height:12px;color:#56626d;font-weight:bold;transform:scaleX(1.0750);text-decoration:underline;">0</span>
<span class="t" style="left:489.30px;top:348.80px;font-size:11.2px;line-height:12px;color:#56626d;font-weight:bold;transform:scaleX(1.0750);text-decoration:underline;">90</span>
<span class="t" style="left:571.80px;top:348.80px;font-size:11.2px;line-height:12px;color:#56626d;font-weight:bold;transform:scaleX(1.0750);text-decoration:underline;">0</span>
<span class="t" style="left:654.30px;top:348.80px;font-size:11.2px;line-height:12px;color:#56626d;font-weight:bold;transform:scaleX(1.0750);text-decoration:underline;">89</span>
<span class="t" style="left:736.80px;top:348.80px;font-size:11.2px;line-height:12px;color:#000;font-weight:bold;transform:scaleX(1.0750);text-decoration:underline;">-1384</span>
<span class="t" style="left:819.30px;top:348.80px;font-size:11.2px;line-height:12px;color:#56626d;font-weight:bold;transform:scaleX(1.0750);text-decoration:underline;">90</span>
<span class="t" style="left:901.80px;top:348.80px;font-size:11.2px;line-height:12px;color:#000;font-weight:bold;transform:scaleX(1.0750);text-decoration:underline;">-17626</span>
<span class="t" style="left:984.30px;top:348.80px;font-size:11.2px;line-height:12px;color:#56626d;font-weight:bold;transform:scaleX(1.0750);text-decoration:underline;">90</span>
<svg class="r" style="left:972.3px;top:350.5px;" width="8" height="8" viewBox="0 0 8 8"><circle cx="3.5" cy="3.5" r="2.7" fill="#f2ea00" stroke="#8a8a3a" stroke-width="0.7"/></svg>
<span class="t" style="left:1066.80px;top:348.80px;font-size:11.2px;line-height:12px;color:#000;font-weight:bold;transform:scaleX(1.0750);text-decoration:underline;">-16513</span>
<span class="t" style="left:1149.30px;top:348.80px;font-size:11.2px;line-height:12px;color:#56626d;font-weight:bold;transform:scaleX(1.0750);text-decoration:underline;">0</span>
<div class="r" style="left:6px;top:411px;width:1220px;height:1px;background:#b6b6b6;"></div>
<svg class="r" style="left:8px;top:387px;" width="17" height="17" viewBox="0 0 17 17"><circle cx="8" cy="8" r="7.4" fill="none" stroke="#444" stroke-width="1.1"/><path d="M5 6.6 L8 9.4 L11 6.6" fill="none" stroke="#333" stroke-width="1.7"/></svg>
<span class="t" style="left:29.60px;top:388.50px;font-size:12px;line-height:14px;color:#1a1a1a;font-weight:bold;transform:scaleX(0.9250);text-decoration:underline;">Ham Knuckle</span>
<span class="t" style="left:159.30px;top:381.80px;font-size:11.2px;line-height:12px;color:#56626d;font-weight:bold;transform:scaleX(1.0750);text-decoration:underline;">0</span>
<span class="t" style="left:241.80px;top:381.80px;font-size:11.2px;line-height:12px;color:#56626d;font-weight:bold;transform:scaleX(1.0750);text-decoration:underline;">0</span>
<span class="t" style="left:324.30px;top:381.80px;font-size:11.2px;line-height:12px;color:#56626d;font-weight:bold;transform:scaleX(1.0750);text-decoration:underline;">0</span>
<span class="t" style="left:406.80px;top:381.80px;font-size:11.2px;line-height:12px;color:#56626d;font-weight:bold;transform:scaleX(1.0750);text-decoration:underline;">0</span>
<span class="t" style="left:489.30px;top:381.80px;font-size:11.2px;line-height:12px;color:#56626d;font-weight:bold;transform:scaleX(1.0750);text-decoration:underline;">0</span>
<span class="t" style="left:571.80px;top:381.80px;font-size:11.2px;line-height:12px;color:#56626d;font-weight:bold;transform:scaleX(1.0750);text-decoration:underline;">0</span>
<span class="t" style="left:654.30px;top:381.80px;font-size:11.2px;line-height:12px;color:#56626d;font-weight:bold;transform:scaleX(1.0750);text-decoration:underline;">0</span>
<span class="t" style="left:736.80px;top:381.80px;font-size:11.2px;line-height:12px;color:#56626d;font-weight:bold;transform:scaleX(1.0750);text-decoration:underline;">0</span>
<span class="t" style="left:819.30px;top:381.80px;font-size:11.2px;line-height:12px;color:#56626d;font-weight:bold;transform:scaleX(1.0750);text-decoration:underline;">0</span>
<span class="t" style="left:901.80px;top:381.80px;font-size:11.2px;line-height:12px;color:#56626d;font-weight:bold;transform:scaleX(1.0750);text-decoration:underline;">0</span>
<span class="t" style="left:984.30px;top:381.80px;font-size:11.2px;line-height:12px;color:#56626d;font-weight:bold;transform:scaleX(1.0750);text-decoration:underline;">0</span>
<span class="t" style="left:1066.80px;top:381.80px;font-size:11.2px;line-height:12px;color:#000;font-weight:bold;transform:scaleX(1.0750);text-decoration:underline;">-2144</span>
<span class="t" style="left:1149.30px;top:381.80px;font-size:11.2px;line-height:12px;color:#56626d;font-weight:bold;transform:scaleX(1.0750);text-decoration:underline;">0</span>
<div class="r" style="left:6px;top:444px;width:1220px;height:1px;background:#b6b6b6;"></div>
<svg class="r" style="left:8px;top:420px;" width="17" height="17" viewBox="0 0 17 17"><circle cx="8" cy="8" r="7.4" fill="none" stroke="#444" stroke-width="1.1"/><path d="M5 6.6 L8 9.4 L11 6.6" fill="none" stroke="#333" stroke-width="1.7"/></svg>
<span class="t" style="left:29.60px;top:421.50px;font-size:12px;line-height:14px;color:#1a1a1a;font-weight:bold;transform:scaleX(0.9250);text-decoration:underline;">Ham Outside</span>
<span class="t" style="left:159.30px;top:414.80px;font-size:11.2px;line-height:12px;color:#56626d;font-weight:bold;transform:scaleX(1.0750);text-decoration:underline;">0</span>
<span class="t" style="left:241.80px;top:414.80px;font-size:11.2px;line-height:12px;color:#56626d;font-weight:bold;transform:scaleX(1.0750);text-decoration:underline;">0</span>
<span class="t" style="left:324.30px;top:414.80px;font-size:11.2px;line-height:12px;color:#56626d;font-weight:bold;transform:scaleX(1.0750);text-decoration:underline;">0</span>
<span class="t" style="left:406.80px;top:414.80px;font-size:11.2px;line-height:12px;color:#56626d;font-weight:bold;transform:scaleX(1.0750);text-decoration:underline;">0</span>
<span class="t" style="left:489.30px;top:414.80px;font-size:11.2px;line-height:12px;color:#56626d;font-weight:bold;transform:scaleX(1.0750);text-decoration:underline;">0</span>
<span class="t" style="left:571.80px;top:414.80px;font-size:11.2px;line-height:12px;color:#56626d;font-weight:bold;transform:scaleX(1.0750);text-decoration:underline;">0</span>
<span class="t" style="left:654.30px;top:414.80px;font-size:11.2px;line-height:12px;color:#56626d;font-weight:bold;transform:scaleX(1.0750);text-decoration:underline;">0</span>
<span class="t" style="left:736.80px;top:414.80px;font-size:11.2px;line-height:12px;color:#56626d;font-weight:bold;transform:scaleX(1.0750);text-decoration:underline;">0</span>
<span class="t" style="left:819.30px;top:414.80px;font-size:11.2px;line-height:12px;color:#56626d;font-weight:bold;transform:scaleX(1.0750);text-decoration:underline;">0</span>
<span class="t" style="left:901.80px;top:414.80px;font-size:11.2px;line-height:12px;color:#56626d;font-weight:bold;transform:scaleX(1.0750);text-decoration:underline;">0</span>
<span class="t" style="left:984.30px;top:414.80px;font-size:11.2px;line-height:12px;color:#56626d;font-weight:bold;transform:scaleX(1.0750);text-decoration:underline;">0</span>
<span class="t" style="left:1066.80px;top:414.80px;font-size:11.2px;line-height:12px;color:#000;font-weight:bold;transform:scaleX(1.0750);text-decoration:underline;">-2344</span>
<span class="t" style="left:1149.30px;top:414.80px;font-size:11.2px;line-height:12px;color:#56626d;font-weight:bold;transform:scaleX(1.0750);text-decoration:underline;">0</span>
<div class="r" style="left:6px;top:477px;width:1220px;height:1px;background:#b6b6b6;"></div>
<svg class="r" style="left:8px;top:453px;" width="17" height="17" viewBox="0 0 17 17"><circle cx="8" cy="8" r="7.4" fill="none" stroke="#444" stroke-width="1.1"/><path d="M5 6.6 L8 9.4 L11 6.6" fill="none" stroke="#333" stroke-width="1.7"/></svg>
<span class="t" style="left:29.60px;top:454.50px;font-size:12px;line-height:14px;color:#1a1a1a;font-weight:bold;transform:scaleX(0.9250);text-decoration:underline;">Head</span>
<span class="t" style="left:159.30px;top:447.80px;font-size:11.2px;line-height:12px;color:#56626d;font-weight:bold;transform:scaleX(1.0750);text-decoration:underline;">0</span>
<span class="t" style="left:241.80px;top:447.80px;font-size:11.2px;line-height:12px;color:#56626d;font-weight:bold;transform:scaleX(1.0750);text-decoration:underline;">0</span>
<span class="t" style="left:324.30px;top:447.80px;font-size:11.2px;line-height:12px;color:#56626d;font-weight:bold;transform:scaleX(1.0750);text-decoration:underline;">4500</span>
<span class="t" style="left:406.80px;top:447.80px;font-size:11.2px;line-height:12px;color:#56626d;font-weight:bold;transform:scaleX(1.0750);text-decoration:underline;">4500</span>
<span class="t" style="left:489.30px;top:447.80px;font-size:11.2px;line-height:12px;color:#56626d;font-weight:bold;transform:scaleX(1.0750);text-decoration:underline;">4500</span>
<span class="t" style="left:571.80px;top:447.80px;font-size:11.2px;line-height:12px;color:#56626d;font-weight:bold;transform:scaleX(1.0750);text-decoration:underline;">4500</span>
<span class="t" style="left:654.30px;top:447.80px;font-size:11.2px;line-height:12px;color:#56626d;font-weight:bold;transform:scaleX(1.0750);text-decoration:underline;">4500</span>
<span class="t" style="left:736.80px;top:447.80px;font-size:11.2px;line-height:12px;color:#56626d;font-weight:bold;transform:scaleX(1.0750);text-decoration:underline;">4500</span>
<span class="t" style="left:819.30px;top:447.80px;font-size:11.2px;line-height:12px;color:#56626d;font-weight:bold;transform:scaleX(1.0750);text-decoration:underline;">4500</span>
<span class="t" style="left:901.80px;top:447.80px;font-size:11.2px;line-height:12px;color:#56626d;font-weight:bold;transform:scaleX(1.0750);text-decoration:underline;">4500</span>
<span class="t" style="left:984.30px;top:447.80px;font-size:11.2px;line-height:12px;color:#56626d;font-weight:bold;transform:scaleX(1.0750);text-decoration:underline;">4500</span>
<span class="t" style="left:1066.80px;top:447.80px;font-size:11.2px;line-height:12px;color:#56626d;font-weight:bold;transform:scaleX(1.0750);text-decoration:underline;">4500</span>
<span class="t" style="left:1149.30px;top:447.80px;font-size:11.2px;line-height:12px;color:#56626d;font-weight:bold;transform:scaleX(1.0750);text-decoration:underline;">0</span>
<div class="r" style="left:6px;top:510px;width:1220px;height:1px;background:#b6b6b6;"></div>
<svg class="r" style="left:8px;top:486px;" width="17" height="17" viewBox="0 0 17 17"><circle cx="8" cy="8" r="7.4" fill="none" stroke="#444" stroke-width="1.1"/><path d="M5 6.6 L8 9.4 L11 6.6" fill="none" stroke="#333" stroke-width="1.7"/></svg>
<span class="t" style="left:29.60px;top:487.50px;font-size:12px;line-height:14px;color:#1a1a1a;font-weight:bold;transform:scaleX(0.9250);text-decoration:underline;">Jowl</span>
<span class="t" style="left:159.30px;top:480.80px;font-size:11.2px;line-height:12px;color:#56626d;font-weight:bold;transform:scaleX(1.0750);text-decoration:underline;">0</span>
<span class="t" style="left:241.80px;top:480.80px;font-size:11.2px;line-height:12px;color:#56626d;font-weight:bold;transform:scaleX(1.0750);text-decoration:underline;">0</span>
<span class="t" style="left:324.30px;top:480.80px;font-size:11.2px;line-height:12px;color:#56626d;font-weight:bold;transform:scaleX(1.0750);text-decoration:underline;">270</span>
<span class="t" style="left:406.80px;top:480.80px;font-size:11.2px;line-height:12px;color:#56626d;font-weight:bold;transform:scaleX(1.0750);text-decoration:underline;">269</span>
<span class="t" style="left:489.30px;top:480.80px;font-size:11.2px;line-height:12px;color:#56626d;font-weight:bold;transform:scaleX(1.0750);text-decoration:underline;">270</span>
<span class="t" style="left:571.80px;top:480.80px;font-size:11.2px;line-height:12px;color:#56626d;font-weight:bold;transform:scaleX(1.0750);text-decoration:underline;">269</span>
<span class="t" style="left:654.30px;top:480.80px;font-size:11.2px;line-height:12px;color:#56626d;font-weight:bold;transform:scaleX(1.0750);text-decoration:underline;">270</span>
<span class="t" style="left:736.80px;top:480.80px;font-size:11.2px;line-height:12px;color:#56626d;font-weight:bold;transform:scaleX(1.0750);text-decoration:underline;">269</span>
<span class="t" style="left:819.30px;top:480.80px;font-size:11.2px;line-height:12px;color:#56626d;font-weight:bold;transform:scaleX(1.0750);text-decoration:underline;">270</span>
<span class="t" style="left:901.80px;top:480.80px;font-size:11.2px;line-height:12px;color:#56626d;font-weight:bold;transform:scaleX(1.0750);text-decoration:underline;">269</span>
<span class="t" style="left:984.30px;top:480.80px;font-size:11.2px;line-height:12px;color:#56626d;font-weight:bold;transform:scaleX(1.0750);text-decoration:underline;">270</span>
<span class="t" style="left:1066.80px;top:480.80px;font-size:11.2px;line-height:12px;color:#000;font-weight:bold;transform:scaleX(1.0750);text-decoration:underline;">-32691</span>
<span class="t" style="left:1149.30px;top:480.80px;font-size:11.2px;line-height:12px;color:#56626d;font-weight:bold;transform:scaleX(1.0750);text-decoration:underline;">0</span>
<div class="r" style="left:6px;top:543px;width:1220px;height:1px;background:#b6b6b6;"></div>
<svg class="r" style="left:8px;top:519px;" width="17" height="17" viewBox="0 0 17 17"><circle cx="8" cy="8" r="7.4" fill="none" stroke="#444" stroke-width="1.1"/><path d="M5 6.6 L8 9.4 L11 6.6" fill="none" stroke="#333" stroke-width="1.7"/></svg>
<span class="t" style="left:29.60px;top:520.50px;font-size:12px;line-height:14px;color:#1a1a1a;font-weight:bold;transform:scaleX(0.9250);text-decoration:underline;">Loin</span>
<span class="t" style="left:159.30px;top:513.80px;font-size:11.2px;line-height:12px;color:#56626d;font-weight:bold;transform:scaleX(1.0750);text-decoration:underline;">0</span>
<span class="t" style="left:241.80px;top:513.80px;font-size:11.2px;line-height:12px;color:#56626d;font-weight:bold;transform:scaleX(1.0750);text-decoration:underline;">0</span>
<span class="t" style="left:324.30px;top:513.80px;font-size:11.2px;line-height:12px;color:#56626d;font-weight:bold;transform:scaleX(1.0750);text-decoration:underline;">33</span>
<span class="t" style="left:406.80px;top:513.80px;font-size:11.2px;line-height:12px;color:#56626d;font-weight:bold;transform:scaleX(1.0750);text-decoration:underline;">213</span>
<span class="t" style="left:489.30px;top:513.80px;font-size:11.2px;line-height:12px;color:#56626d;font-weight:bold;transform:scaleX(1.0750);text-decoration:underline;">10</span>
<span class="t" style="left:571.80px;top:513.80px;font-size:11.2px;line-height:12px;color:#56626d;font-weight:bold;transform:scaleX(1.0750);text-decoration:underline;">4</span>
<span class="t" style="left:654.30px;top:513.80px;font-size:11.2px;line-height:12px;color:#56626d;font-weight:bold;transform:scaleX(1.0750);text-decoration:underline;">10</span>
<span class="t" style="left:736.80px;top:513.80px;font-size:11.2px;line-height:12px;color:#56626d;font-weight:bold;transform:scaleX(1.0750);text-decoration:underline;">4</span>
<span class="t" style="left:819.30px;top:513.80px;font-size:11.2px;line-height:12px;color:#56626d;font-weight:bold;transform:scaleX(1.0750);text-decoration:underline;">12</span>
<span class="t" style="left:901.80px;top:513.80px;font-size:11.2px;line-height:12px;color:#000;font-weight:bold;transform:scaleX(1.0750);text-decoration:underline;">-5259</span>
<span class="t" style="left:984.30px;top:513.80px;font-size:11.2px;line-height:12px;color:#56626d;font-weight:bold;transform:scaleX(1.0750);text-decoration:underline;">34</span>
<span class="t" style="left:1066.80px;top:513.80px;font-size:11.2px;line-height:12px;color:#000;font-weight:bold;transform:scaleX(1.0750);text-decoration:underline;">-23451</span>
<span class="t" style="left:1149.30px;top:513.80px;font-size:11.2px;line-height:12px;color:#56626d;font-weight:bold;transform:scaleX(1.0750);text-decoration:underline;">0</span>
<div class="r" style="left:6px;top:576px;width:1220px;height:1px;background:#b6b6b6;"></div>
<svg class="r" style="left:8px;top:552px;" width="17" height="17" viewBox="0 0 17 17"><circle cx="8" cy="8" r="7.4" fill="none" stroke="#444" stroke-width="1.1"/><path d="M5 6.6 L8 9.4 L11 6.6" fill="none" stroke="#333" stroke-width="1.7"/></svg>
<span class="t" style="left:29.60px;top:553.50px;font-size:12px;line-height:14px;color:#1a1a1a;font-weight:bold;transform:scaleX(0.9250);text-decoration:underline;">Loin S/E</span>
<span class="t" style="left:159.30px;top:546.80px;font-size:11.2px;line-height:12px;color:#56626d;font-weight:bold;transform:scaleX(1.0750);text-decoration:underline;">0</span>
<span class="t" style="left:241.80px;top:546.80px;font-size:11.2px;line-height:12px;color:#56626d;font-weight:bold;transform:scaleX(1.0750);text-decoration:underline;">0</span>
<span class="t" style="left:324.30px;top:546.80px;font-size:11.2px;line-height:12px;color:#56626d;font-weight:bold;transform:scaleX(1.0750);text-decoration:underline;">0</span>
<span class="t" style="left:406.80px;top:546.80px;font-size:11.2px;line-height:12px;color:#56626d;font-weight:bold;transform:scaleX(1.0750);text-decoration:underline;">0</span>
<span class="t" style="left:489.30px;top:546.80px;font-size:11.2px;line-height:12px;color:#56626d;font-weight:bold;transform:scaleX(1.0750);text-decoration:underline;">0</span>
<span class="t" style="left:571.80px;top:546.80px;font-size:11.2px;line-height:12px;color:#56626d;font-weight:bold;transform:scaleX(1.0750);text-decoration:underline;">0</span>
<span class="t" style="left:654.30px;top:546.80px;font-size:11.2px;line-height:12px;color:#56626d;font-weight:bold;transform:scaleX(1.0750);text-decoration:underline;">0</span>
<span class="t" style="left:736.80px;top:546.80px;font-size:11.2px;line-height:12px;color:#56626d;font-weight:bold;transform:scaleX(1.0750);text-decoration:underline;">0</span>
<span class="t" style="left:819.30px;top:546.80px;font-size:11.2px;line-height:12px;color:#56626d;font-weight:bold;transform:scaleX(1.0750);text-decoration:underline;">0</span>
<span class="t" style="left:901.80px;top:546.80px;font-size:11.2px;line-height:12px;color:#56626d;font-weight:bold;transform:scaleX(1.0750);text-decoration:underline;">0</span>
<span class="t" style="left:984.30px;top:546.80px;font-size:11.2px;line-height:12px;color:#56626d;font-weight:bold;transform:scaleX(1.0750);text-decoration:underline;">0</span>
<span class="t" style="left:1066.80px;top:546.80px;font-size:11.2px;line-height:12px;color:#56626d;font-weight:bold;transform:scaleX(1.0750);text-decoration:underline;">0</span>
<span class="t" style="left:1149.30px;top:546.80px;font-size:11.2px;line-height:12px;color:#56626d;font-weight:bold;transform:scaleX(1.0750);text-decoration:underline;">0</span>
<div class="r" style="left:6px;top:609px;width:1220px;height:1px;background:#b6b6b6;"></div>
<svg class="r" style="left:8px;top:585px;" width="17" height="17" viewBox="0 0 17 17"><circle cx="8" cy="8" r="7.4" fill="none" stroke="#444" stroke-width="1.1"/><path d="M5 6.6 L8 9.4 L11 6.6" fill="none" stroke="#333" stroke-width="1.7"/></svg>
<span class="t" style="left:29.60px;top:586.50px;font-size:12px;line-height:14px;color:#1a1a1a;font-weight:bold;transform:scaleX(0.9250);text-decoration:underline;">Middle</span>
<span class="t" style="left:159.30px;top:579.80px;font-size:11.2px;line-height:12px;color:#56626d;font-weight:bold;transform:scaleX(1.0750);text-decoration:underline;">0</span>
<span class="t" style="left:241.80px;top:579.80px;font-size:11.2px;line-height:12px;color:#56626d;font-weight:bold;transform:scaleX(1.0750);text-decoration:underline;">0</span>
<span class="t" style="left:324.30px;top:579.80px;font-size:11.2px;line-height:12px;color:#56626d;font-weight:bold;transform:scaleX(1.0750);text-decoration:underline;">0</span>
<span class="t" style="left:406.80px;top:579.80px;font-size:11.2px;line-height:12px;color:#56626d;font-weight:bold;transform:scaleX(1.0750);text-decoration:underline;">0</span>
<span class="t" style="left:489.30px;top:579.80px;font-size:11.2px;line-height:12px;color:#56626d;font-weight:bold;transform:scaleX(1.0750);text-decoration:underline;">0</span>
<span class="t" style="left:571.80px;top:579.80px;font-size:11.2px;line-height:12px;color:#56626d;font-weight:bold;transform:scaleX(1.0750);text-decoration:underline;">0</span>
<span class="t" style="left:654.30px;top:579.80px;font-size:11.2px;line-height:12px;color:#56626d;font-weight:bold;transform:scaleX(1.0750);text-decoration:underline;">0</span>
<span class="t" style="left:736.80px;top:579.80px;font-size:11.2px;line-height:12px;color:#56626d;font-weight:bold;transform:scaleX(1.0750);text-decoration:underline;">0</span>
<span class="t" style="left:819.30px;top:579.80px;font-size:11.2px;line-height:12px;color:#56626d;font-weight:bold;transform:scaleX(1.0750);text-decoration:underline;">0</span>
<span class="t" style="left:901.80px;top:579.80px;font-size:11.2px;line-height:12px;color:#56626d;font-weight:bold;transform:scaleX(1.0750);text-decoration:underline;">0</span>
<span class="t" style="left:984.30px;top:579.80px;font-size:11.2px;line-height:12px;color:#56626d;font-weight:bold;transform:scaleX(1.0750);text-decoration:underline;">0</span>
<span class="t" style="left:1066.80px;top:579.80px;font-size:11.2px;line-height:12px;color:#56626d;font-weight:bold;transform:scaleX(1.0750);text-decoration:underline;">0</span>
<span class="t" style="left:1149.30px;top:579.80px;font-size:11.2px;line-height:12px;color:#56626d;font-weight:bold;transform:scaleX(1.0750);text-decoration:underline;">0</span>
<div class="r" style="left:6px;top:642px;width:1220px;height:1px;background:#b6b6b6;"></div>
<svg class="r" style="left:8px;top:618px;" width="17" height="17" viewBox="0 0 17 17"><circle cx="8" cy="8" r="7.4" fill="none" stroke="#444" stroke-width="1.1"/><path d="M5 6.6 L8 9.4 L11 6.6" fill="none" stroke="#333" stroke-width="1.7"/></svg>
<span class="t" style="left:29.60px;top:619.50px;font-size:12px;line-height:14px;color:#1a1a1a;font-weight:bold;transform:scaleX(0.9250);text-decoration:underline;">Shoulder</span>
<span class="t" style="left:159.30px;top:612.80px;font-size:11.2px;line-height:12px;color:#56626d;font-weight:bold;transform:scaleX(1.0750);text-decoration:underline;">0</span>
<span class="t" style="left:241.80px;top:612.80px;font-size:11.2px;line-height:12px;color:#56626d;font-weight:bold;transform:scaleX(1.0750);text-decoration:underline;">0</span>
<span class="t" style="left:324.30px;top:612.80px;font-size:11.2px;line-height:12px;color:#56626d;font-weight:bold;transform:scaleX(1.0750);text-decoration:underline;">28</span>
<span class="t" style="left:406.80px;top:612.80px;font-size:11.2px;line-height:12px;color:#000;font-weight:bold;transform:scaleX(1.0750);text-decoration:underline;">-1392</span>
<span class="t" style="left:489.30px;top:612.80px;font-size:11.2px;line-height:12px;color:#56626d;font-weight:bold;transform:scaleX(1.0750);text-decoration:underline;">28</span>
<span class="t" style="left:571.80px;top:612.80px;font-size:11.2px;line-height:12px;color:#56626d;font-weight:bold;transform:scaleX(1.0750);text-decoration:underline;">0</span>
<span class="t" style="left:654.30px;top:612.80px;font-size:11.2px;line-height:12px;color:#56626d;font-weight:bold;transform:scaleX(1.0750);text-decoration:underline;">2</span>
<span class="t" style="left:736.80px;top:612.80px;font-size:11.2px;line-height:12px;color:#56626d;font-weight:bold;transform:scaleX(1.0750);text-decoration:underline;">0</span>
<span class="t" style="left:819.30px;top:612.80px;font-size:11.2px;line-height:12px;color:#56626d;font-weight:bold;transform:scaleX(1.0750);text-decoration:underline;">2</span>
<svg class="r" style="left:807.3px;top:614.5px;" width="8" height="8" viewBox="0 0 8 8"><circle cx="3.5" cy="3.5" r="2.7" fill="#f2ea00" stroke="#8a8a3a" stroke-width="0.7"/></svg>
<span class="t" style="left:901.80px;top:612.80px;font-size:11.2px;line-height:12px;color:#56626d;font-weight:bold;transform:scaleX(1.0750);text-decoration:underline;">4227</span>
<span class="t" style="left:984.30px;top:612.80px;font-size:11.2px;line-height:12px;color:#56626d;font-weight:bold;transform:scaleX(1.0750);text-decoration:underline;">2</span>
<svg class="r" style="left:972.3px;top:614.5px;" width="8" height="8" viewBox="0 0 8 8"><circle cx="3.5" cy="3.5" r="2.7" fill="#f2ea00" stroke="#8a8a3a" stroke-width="0.7"/></svg>
<span class="t" style="left:1066.80px;top:612.80px;font-size:11.2px;line-height:12px;color:#000;font-weight:bold;transform:scaleX(1.0750);text-decoration:underline;">-26395</span>
<span class="t" style="left:1149.30px;top:612.80px;font-size:11.2px;line-height:12px;color:#56626d;font-weight:bold;transform:scaleX(1.0750);text-decoration:underline;">0</span>
<div class="r" style="left:5px;top:666px;width:1236px;height:24.5px;background:#fff;box-sizing:border-box;border:1px solid #b5b5b5;border-radius:3px;"></div>
<span class="t" style="left:14.40px;top:672.60px;font-size:11px;line-height:12px;color:#8c8c8c;font-weight:bold;transform:scaleX(1.0313);">Available</span>
<span class="t" style="left:89.20px;top:672.60px;font-size:11px;line-height:12px;color:#000;font-weight:bold;transform:scaleX(0.9958);">Oversold</span>
<svg class="r" style="left:162px;top:675px;" width="8" height="8" viewBox="0 0 8 8"><circle cx="3.7" cy="3.4" r="2.3" fill="#f2ea00" stroke="#b8b040" stroke-width="0.5"/></svg>
<span class="t" style="left:170.00px;top:671.60px;font-size:12px;line-height:14px;color:#333;transform:scaleX(0.9469);">Warning</span>
<svg class="r" style="left:236px;top:675px;" width="8" height="8" viewBox="0 0 8 8"><circle cx="3.7" cy="3.4" r="2.3" fill="#f0a030" stroke="#c07820" stroke-width="0.5"/></svg>
<span class="t" style="left:244.00px;top:671.60px;font-size:12px;line-height:14px;color:#333;">Urgent</span>
<div class="r" style="left:0px;top:696px;width:1245px;height:1px;background:#50555a;"></div>
<div class="r" style="left:110px;top:696px;width:1px;height:1px;background:#fff;"></div>
<div class="r" style="left:233px;top:696px;width:1px;height:1px;background:#fff;"></div>
</body></html>
